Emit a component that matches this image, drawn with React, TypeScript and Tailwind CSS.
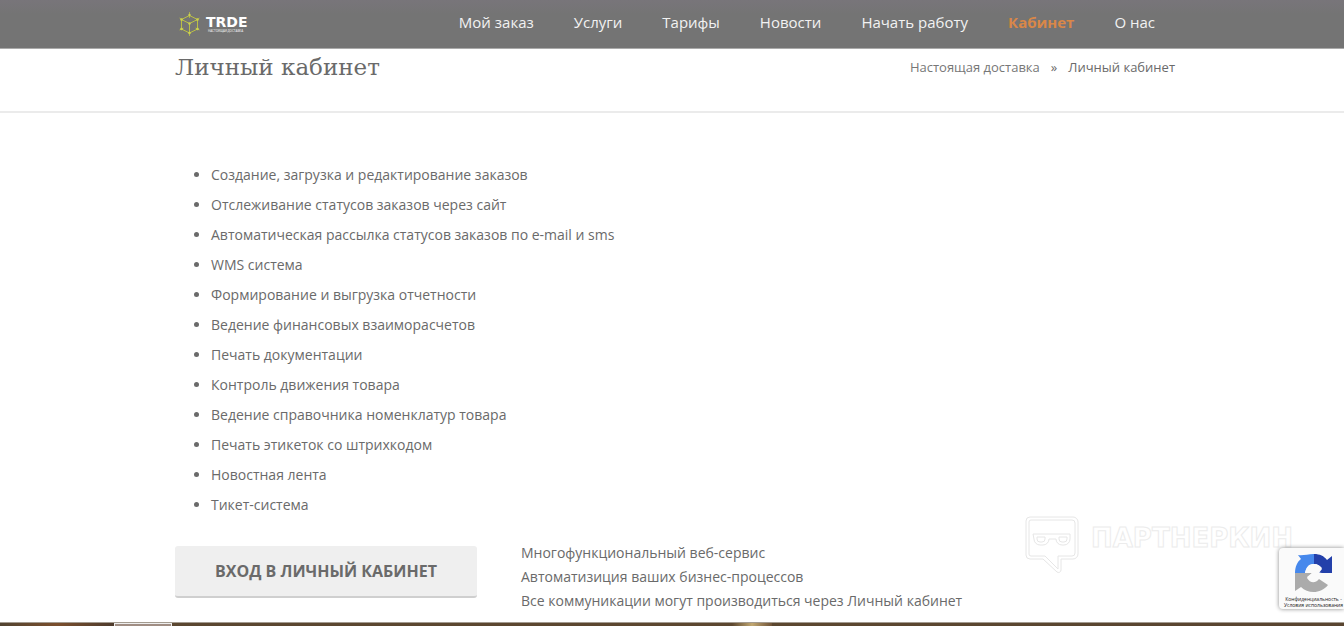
const nav = ['Мой заказ', 'Услуги', 'Тарифы', 'Новости', 'Начать работу', 'Кабинет', 'О нас'];

const features = [
  'Создание, загрузка и редактирование заказов',
  'Отслеживание статусов заказов через сайт',
  'Автоматическая рассылка статусов заказов по e-mail и sms',
  'WMS система',
  'Формирование и выгрузка отчетности',
  'Ведение финансовых взаиморасчетов',
  'Печать документации',
  'Контроль движения товара',
  'Ведение справочника номенклатур товара',
  'Печать этикеток со штрихкодом',
  'Новостная лента',
  'Тикет-система',
];

function Logo() {
  return (
    <a href="#" className="ml-1 flex items-center gap-1.5">
      <svg width="21" height="24" viewBox="0 0 21 24" fill="none" stroke="#b9be45" strokeWidth="1" aria-hidden="true">
        <path d="M10.5 3.5 18.5 7.5v9.5l-8 4-8-4V7.5zM2.5 7.5l8 4 8-4M10.5 11.5V21" />
        <path d="M10.5 0v6M0.5 6l4 2.5M20.5 6l-4 2.5M0.5 18l4-2M20.5 18l-4-2M10.5 19v5" strokeWidth="0.8" />
        <g fill="#cdd24f" stroke="none">
          <circle cx="10.5" cy="3" r="1.2" />
          <circle cx="2.5" cy="7.5" r="1.3" />
          <circle cx="18.5" cy="7.5" r="1.3" />
          <circle cx="2.5" cy="17" r="1.3" />
          <circle cx="18.5" cy="17" r="1.3" />
          <circle cx="10.5" cy="21" r="1.3" />
          <circle cx="10.5" cy="11.5" r="1.2" />
        </g>
      </svg>
      <span className="flex flex-col text-white">
        <span className="font-['DejaVu_Sans',sans-serif] text-[14px] leading-[14px] font-bold">TRDE</span>
        <span className="pl-0.5 font-['Open_Sans',sans-serif] text-[3px] leading-[4px] whitespace-nowrap">
          НАСТОЯЩАЯ ДОСТАВКА
        </span>
      </span>
    </a>
  );
}

function Watermark() {
  return (
    <div className="pointer-events-none absolute right-[51px] bottom-[52px] flex items-start gap-3" aria-hidden="true">
      <svg width="54" height="58" viewBox="0 0 54 58" fill="none" stroke="#e6e6e6" strokeWidth="1">
        <path d="M5 1h43a5 5 0 0 1 5 5v32a5 5 0 0 1-5 5H36v11a2.500 2.500 0 0 1-4 2L18 43H5a4 4 0 0 1-4-4V5a4 4 0 0 1 4-4z" />
        <path d="M6 4h41a3 3 0 0 1 3 3v30a3 3 0 0 1-3 3H33v13L20 40H6a2 2 0 0 1-2-2V6a2 2 0 0 1 2-2z" />
        <path d="M8 18h37v5a6 6 0 0 1-6 6h-2a6 6 0 0 1-6-6h-7a6 6 0 0 1-6 6h-3a6 6 0 0 1-6-6z" />
        <path d="M12 21h8v2a3 3 0 0 1-3 3h-2a3 3 0 0 1-3-3zM34 21h8v2a3 3 0 0 1-3 3h-2a3 3 0 0 1-3-3z" />
      </svg>
      <span className="mt-[9px] font-['DejaVu_Sans',sans-serif] text-[26px] leading-[26px] font-bold text-white [-webkit-text-stroke:1px_#ececec]">
        ПАРТНЕРКИН
      </span>
    </div>
  );
}

function CaptchaBadge() {
  return (
    <div className="absolute right-0 bottom-[17px] flex w-[65px] flex-col items-center overflow-hidden rounded-l-sm bg-[#fafafa] pt-[5px] pb-px pl-1 shadow-[0_0_4px_#888]">
      <svg width="38" height="40" viewBox="0 0 38 40" aria-hidden="true">
        <path d="M19 1v10c-5 0-8 4-9 9H0C0 14 2 9 6 6L3 2c5 1 9-1 16-1z" fill="#4688ec" />
        <path d="M19 1c6 0 10 2 13 6l5-4v17H24l3-4c-2-3-4-5-8-5z" fill="#2340aa" />
        <path d="M0 20h17l-5 5c3 5 8 6 12 1l9 6c-7 9-20 9-27 2l-6 4z" fill="#ababab" />
        <path d="M10 20c1-5 3-9 8-9 5 0 7 2 9 4l-5 4 5 1-2 4c-3 5-10 5-13 0l5-4z" fill="#fafafa" />
      </svg>
      <p className="mt-[3px] text-center text-[5px] leading-[6px] whitespace-nowrap text-[#222]">
        <a href="#">Конфиденциальность</a> -<br />
        <a href="#">Условия использования</a>
      </p>
    </div>
  );
}

export default function App() {
  return (
    <div className="relative overflow-hidden bg-white font-['Open_Sans','Noto_Sans',sans-serif] text-[#6a6a6a]">
      <header className="border-b border-[#aaa] bg-linear-to-b from-[#78757a] to-[#747474] to-30% pl-1.5">
        <div className="mx-auto flex h-12 max-w-[1000px] items-center justify-between">
          <Logo />
          <nav className="mr-5 flex gap-10 pb-1 text-[15px] leading-6 text-[#f2f2f2]">
            {nav.map((item) => (
              <a key={item} href="#" className={item === 'Кабинет' ? 'font-bold text-[#d98748]' : ''}>
                {item}
              </a>
            ))}
          </nav>
        </div>
      </header>

      <div className="border-b-2 border-[#ebebeb] pl-1.5">
        <div className="mx-auto flex max-w-[1000px] items-start justify-between pb-[26px]">
          <h1 className="font-['Roboto_Slab','DejaVu_Serif',serif] text-[23px] leading-9">Личный кабинет</h1>
          <nav aria-label="Навигация" className="flex gap-[11px] text-[13px] leading-9">
            <a href="#" className="text-[#777]">Настоящая доставка</a>
            <span>»</span>
            <span>Личный кабинет</span>
          </nav>
        </div>
      </div>

      <main className="pt-[47px] pb-[9px] pl-1.5 text-[14px]">
        <div className="mx-auto max-w-[1000px]">
          <ul className="list-disc pl-9 leading-[30px]">
            {features.map((feature) => (
              <li key={feature}>{feature}</li>
            ))}
          </ul>
          <div className="mt-[21px] flex items-start gap-11">
            <button
              type="button"
              className="mt-[5px] h-[52px] w-[302px] rounded-[3px] border-b-2 border-[#cfcfcf] bg-[#efefef] text-[16px] font-bold"
            >
              ВХОД В ЛИЧНЫЙ КАБИНЕТ
            </button>
            <p className="leading-6">
              Многофункциональный веб-сервис
              <br />
              Автоматизиция ваших бизнес-процессов
              <br />
              Все коммуникации могут производиться через Личный кабинет
            </p>
          </div>
        </div>
      </main>

      <footer className="flex h-1 border-t border-[#a39b90] bg-linear-to-r from-[#5a4630] via-[#5c472f] to-[#594530]">
        <div className="w-[114px] bg-linear-to-r from-[#514330] via-[#7b4e2c] to-[#4d3b2c]" />
        <div className="w-[58px] border-x border-t border-[#eee] bg-[#a08e84]" />
        <div className="w-[560px]" />
        <div className="w-10 bg-linear-to-r from-[#5c472f] via-[#c2a871] to-[#6e5237]" />
      </footer>

      <Watermark />
      <CaptchaBadge />
    </div>
  );
}
